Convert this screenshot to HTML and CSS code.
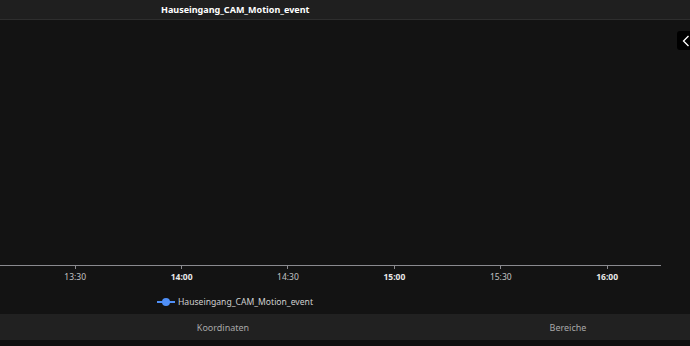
FILE: index.html
```html
<!DOCTYPE html>
<html lang="de">
<head>
  <meta charset="UTF-8">
  <title>Hauseingang_CAM_Motion_event</title>
  <link rel="stylesheet" href="styles.css">
</head>
<body>

<div id="header">
  <span class="title">Hauseingang_CAM_Motion_event</span>
</div>

<div id="chart">
  <div class="plot"></div>
  <div class="axis">
    <div class="tick"><span>13:30</span></div>
    <div class="tick major"><span>14:00</span></div>
    <div class="tick"><span>14:30</span></div>
    <div class="tick major"><span>15:00</span></div>
    <div class="tick"><span>15:30</span></div>
    <div class="tick major"><span>16:00</span></div>
  </div>
  <div class="legend">
    <span class="marker"><i></i></span>
    <span class="label">Hauseingang_CAM_Motion_event</span>
  </div>
  <button class="side-toggle" title="Einklappen">
    <svg width="8" height="12" viewBox="0 0 8 12"><path d="M6.5 1 L1.5 6 L6.5 11" fill="none" stroke="#fff" stroke-width="1.3"/></svg>
  </button>
</div>

<div id="tabs">
  <div class="tab">Koordinaten</div>
  <div class="tab">Bereiche</div>
</div>
<div id="footer"></div>

</body>
</html>
```

FILE: styles.css
```css
body {
  font-family: 'Noto Sans', 'Open Sans', sans-serif;
  margin: 0;
  height: 346px;
  overflow: hidden;
  background-color: #131313;
  color: #ddd;
}

#header {
  height: 19px;
  background-color: #1f1f1f;
  border-bottom: 1px solid #2e2e2e;
  padding-left: 161px;
  display: flex;
  align-items: center;
}

#header .title {
  font-size: 9px;
  font-weight: bold;
  color: #fff;
}

#chart {
  position: relative;
}

.plot {
  width: 661px;
  height: 245px;
  border-bottom: 1px solid #8a8a8f;
}

.axis {
  display: flex;
  padding-left: 22px;
  height: 23px;
}

.tick {
  width: 106.4px;
  display: flex;
  flex-direction: column;
  align-items: center;
  font-size: 8.5px;
  color: #c4c4c4;
}

.tick::before {
  content: '';
  width: 1px;
  height: 3px;
  background-color: #8a8a8f;
  margin-bottom: 2px;
}

.tick.major {
  font-weight: bold;
  color: #e8e8e8;
}

.legend {
  display: flex;
  align-items: center;
  padding-left: 157px;
  height: 25px;
  gap: 3px;
}

.legend .marker {
  width: 18px;
  height: 2px;
  background-color: #4f8ff7;
  display: flex;
  align-items: center;
  justify-content: center;
}

.legend .marker i {
  width: 8px;
  height: 8px;
  border-radius: 50%;
  background-color: #4f8ff7;
}

.legend .label {
  font-size: 8.6px;
  color: #d0d0d0;
}

.side-toggle {
  position: absolute;
  top: 11px;
  right: 0;
  width: 13px;
  height: 19px;
  padding: 0 0 0 5px;
  border: none;
  border-radius: 3px 0 0 3px;
  background-color: #000;
  display: flex;
  align-items: center;
  cursor: pointer;
}

#tabs {
  display: grid;
  grid-template-columns: 446px 1fr;
  height: 26px;
  background-color: #212121;
}

.tab {
  display: flex;
  align-items: center;
  justify-content: center;
  font-size: 9px;
  color: #a8a8a8;
}

#footer {
  height: 6px;
  background-color: #0f0f0f;
}
```
